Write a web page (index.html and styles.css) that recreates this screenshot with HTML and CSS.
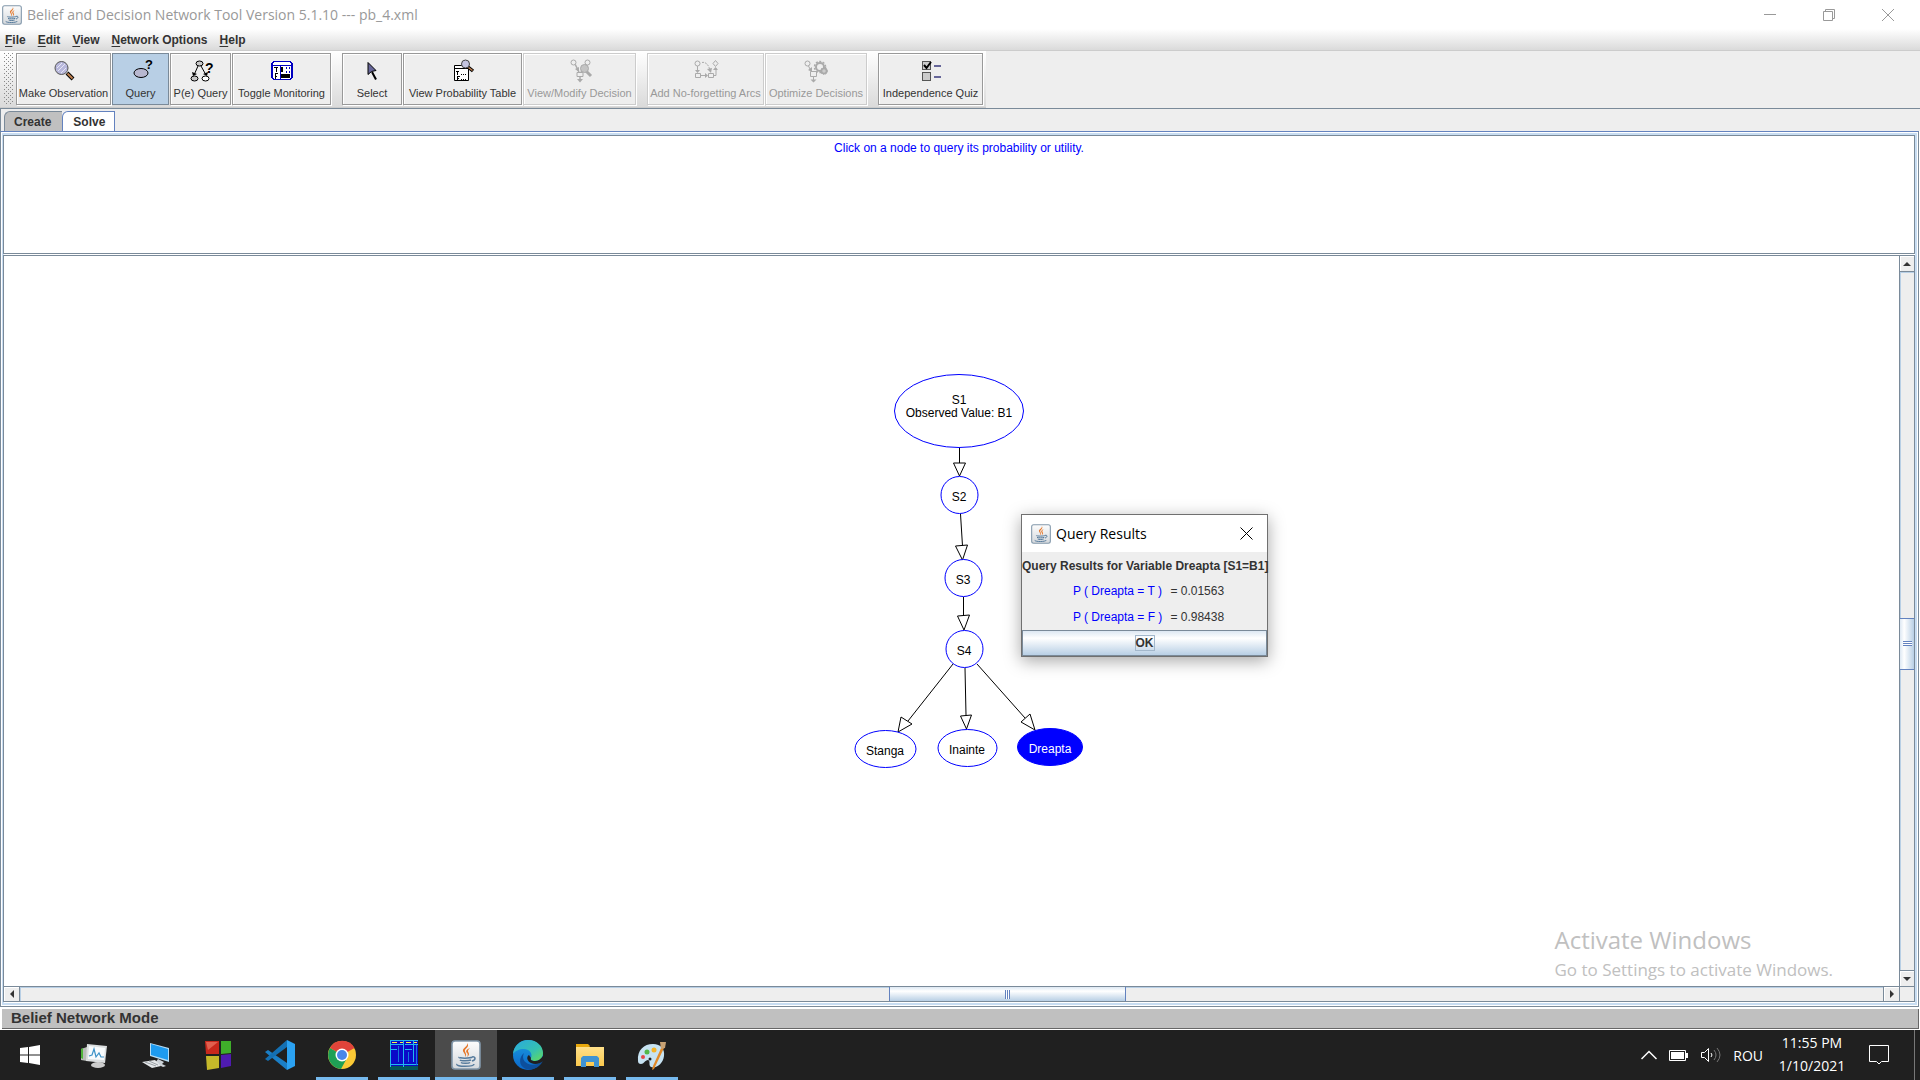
FILE: index.html
```html
<!DOCTYPE html>
<html lang="en">
<head>
<meta charset="utf-8">
<title>Belief and Decision Network Tool Version 5.1.10 --- pb_4.xml</title>
<link rel="stylesheet" href="styles.css">
</head>
<body>
<svg class="defs" aria-hidden="true">
  <defs>
    <linearGradient id="jbg" x1="0" y1="0" x2="0" y2="1"><stop offset="0" stop-color="#fdfdfd"/><stop offset="1" stop-color="#d4d8dc"/></linearGradient>
    <linearGradient id="edge1" x1="0" y1="0" x2="1" y2="1"><stop offset="0" stop-color="#2aa9e0"/><stop offset=".6" stop-color="#35c1b1"/><stop offset="1" stop-color="#66dd55"/></linearGradient>
    <linearGradient id="edge2" x1="0" y1="0" x2="0" y2="1"><stop offset="0" stop-color="#1b9de2"/><stop offset="1" stop-color="#0b66c8"/></linearGradient>
    <linearGradient id="folder" x1="0" y1="0" x2="0" y2="1"><stop offset="0" stop-color="#ffe08a"/><stop offset="1" stop-color="#fbc94d"/></linearGradient>
    <symbol id="java" viewBox="0 0 30 30">
      <rect x="1" y="1" width="28" height="28" rx="3" fill="url(#jbg)" stroke="#8298ab" stroke-width="1.6"/>
      <path d="M16 3c2 3-5 5-4 8 .4 2 3 3 2 6 3-3-1-5 0-7 1-2 5-4 2-7zM19 8c-3 1-5 3-3 5 1 1 1 2 0 4 4-3 1-4 1-6 0-1 1-2 2-3z" fill="#e5772a"/>
      <path d="M8 17c-1 1.500 12 1.500 13 0M9 20c1 1 9 1 11 0M10 22.500c1 1 8 1 9 0M21 17c4-1 4 3 0 4M6 24c-2 3 17 3 17 0" fill="none" stroke="#557a9c" stroke-width="1.500"/>
    </symbol>
  </defs>
</svg>

<div class="window">
  <header class="titlebar">
    <svg class="app-icon" aria-hidden="true"><use href="#java"/></svg>
    <h1 class="title">Belief and Decision Network Tool Version 5.1.10 --- pb_4.xml</h1>
    <div class="window-controls">
      <button type="button" aria-label="Minimize"><svg width="12" height="12"><path d="M0 5.500h12"/></svg></button>
      <button type="button" aria-label="Restore"><svg width="12" height="12"><path d="M.5 2.500h9v9h-9zM2.500 2.500v-2h9v9h-2"/></svg></button>
      <button type="button" aria-label="Close"><svg width="12" height="12"><path d="M0 0l12 12M12 0L0 12"/></svg></button>
    </div>
  </header>

  <nav class="menubar">
    <button type="button"><u>F</u>ile</button>
    <button type="button"><u>E</u>dit</button>
    <button type="button"><u>V</u>iew</button>
    <button type="button"><u>N</u>etwork Options</button>
    <button type="button"><u>H</u>elp</button>
  </nav>

  <div class="toolbar-row">
    <div class="toolbar">
      <span class="grip"></span>
      <button type="button" class="tool w-observe">
        <svg viewBox="0 0 24 24"><path d="M15 14l6 6" stroke="#000" stroke-width="4"/><path d="M15.500 14.500l5 5" stroke="#c08050" stroke-width="2"/><circle cx="9.500" cy="9" r="6.500" fill="#b8b8dc" stroke="#555" /><path d="M5 9l5-5M6 12l7-7M9 14l5-5" stroke="#e6e6f5"/></svg>
        <span>Make Observation</span></button>
      <button type="button" class="tool active w-query">
        <svg viewBox="0 0 24 24"><ellipse cx="12" cy="14" rx="7" ry="4.500" fill="#b8b8d0" stroke="#000"/><text x="16" y="10" font-size="13">?</text></svg>
        <span>Query</span></button>
      <button type="button" class="tool w-pe">
        <svg viewBox="0 0 24 24"><path d="M9 7L5 16M12 7l5 9" stroke="#000"/><path d="M3 13l1 4 4-2zM19 13l-1 4-4-2z" fill="#000"/><ellipse cx="10.500" cy="4.500" rx="3.500" ry="2.500" fill="#c8c8c8" stroke="#000"/><ellipse cx="5.500" cy="19.500" rx="3.500" ry="2.500" fill="#c8c8c8" stroke="#000"/><ellipse cx="16.500" cy="19.500" rx="3.500" ry="2.500" fill="#fff" stroke="#000"/><text x="16" y="14" font-size="14">?</text></svg>
        <span>P(e) Query</span></button>
      <button type="button" class="tool w-monitor">
        <svg viewBox="0 0 24 24" shape-rendering="crispEdges"><path d="M4 2.500h16l2 2v14l-2 2H4l-2-2v-14z" fill="#fff" stroke="#0000c0" stroke-width="1.500"/><path d="M2 6.500h20M10.500 6v14" stroke="#0000c0"/><path d="M11 8h2v5h-2zM11 15h9v4h-9z" fill="#000"/><path d="M16.500 8v2M19.500 8v2M16.500 12v2M19.500 12v2" stroke="#0000c0"/><path d="M4 8.500h4M6.500 8v5M5.500 14v6M5 14.500h3M5 17h2" stroke="#000"/></svg>
        <span>Toggle Monitoring</span></button>
      <span class="separator"></span>
      <button type="button" class="tool w-select">
        <svg viewBox="0 0 24 24"><path d="M12 13l4 7.500" stroke="#000" stroke-width="2"/><path d="M8 3.500v12l3.500-3 4.500-1z" fill="#666699" stroke="#000"/></svg>
        <span>Select</span></button>
      <button type="button" class="tool w-table">
        <svg viewBox="0 0 24 24"><path d="M3.500 6.500h14v15h-14zM3 9.500h15" fill="#fff" stroke="#000"/><path d="M5 12.500h3M6.500 12v4M6.500 17v4M6 17.500h3M6 19.500h2" stroke="#000"/><path d="M10 15.500h6M10 20.500h6" stroke="#000" stroke-dasharray="1 1"/><path d="M17 8l5 4" stroke="#000" stroke-width="3.500"/><path d="M17.500 8.500l4 3" stroke="#c08050" stroke-width="1.500"/><circle cx="14.500" cy="5" r="4" fill="#c4c4e0" stroke="#444"/></svg>
        <span>View Probability Table</span></button>
      <button type="button" class="tool w-modify" disabled>
        <svg viewBox="0 0 24 24"><path d="M7 5l4 8M18 5l-5 8M12 18v4" stroke="#aaa" stroke-width="1.500"/><path d="M9 20h6l-3 3.500zM7 10l4 3V8z" fill="#aaa"/><circle cx="5.500" cy="3.500" r="2.500" fill="#eee" stroke="#aaa"/><circle cx="19.500" cy="3.500" r="2.500" fill="#eee" stroke="#aaa"/><path d="M9 13.500h6v4H9z" fill="#eee" stroke="#aaa"/><path d="M18 12l5 5" stroke="#aaa" stroke-width="3"/><circle cx="16.500" cy="9.500" r="4" fill="#c4c4c4" stroke="#aaa"/></svg>
        <span>View/Modify Decision</span></button>
      <span class="separator"></span>
      <button type="button" class="tool w-arcs" disabled>
        <svg viewBox="0 0 24 24" fill="none" stroke="#aaa"><circle cx="3.500" cy="4.500" r="2.500"/><path d="M21.500 1.500l2.500 3-2.500 3-2.500-3zM1.500 14.500h5v4h-5zM14.500 14.500h5v4h-5zM3.500 7v5M7 16.500h5M19 16.500h3V9"/><path d="M8 3.500c4-1 7 3 8 8" stroke-dasharray="2 1"/><path d="M1 11h5l-2.500 3zM11 14v5l3-2.500zM19 11h5l-2.500-3zM13 10l5-1-1 5z" fill="#aaa" stroke="none"/></svg>
        <span>Add No-forgetting Arcs</span></button>
      <button type="button" class="tool w-optimize" disabled>
        <svg viewBox="0 0 24 24" fill="none" stroke="#aaa"><circle cx="3.500" cy="4.500" r="2.500"/><path d="M4.500 7l2.500 5M6.500 12.500h6v5h-6zM9.500 18v3"/><path d="M6.500 20.500h6l-3 3zM4 11l4 2V8z" fill="#aaa" stroke="none"/><circle cx="16" cy="8" r="4" stroke-width="2"/><circle cx="16" cy="8" r="5.500" stroke-dasharray="2 1.500" stroke-width="1.500"/><circle cx="20" cy="12" r="2.500" fill="#ccc" stroke-width="1.500"/><circle cx="20" cy="12" r="3.500" stroke-dasharray="1.500 1"/></svg>
        <span>Optimize Decisions</span></button>
      <span class="separator"></span>
      <button type="button" class="tool w-quiz">
        <svg viewBox="0 0 24 24" shape-rendering="crispEdges"><path d="M3.500 2.500h8v8h-8zM3.500 13.500h8v8h-8z" fill="#ccc" stroke="#555"/><path d="M5 6l2.500 3L12 3" fill="none" stroke="#000" stroke-width="2" shape-rendering="auto"/><path d="M15 7h7M15 18h7" stroke="#666699" stroke-width="2"/></svg>
        <span>Independence Quiz</span></button>
    </div>
  </div>

  <div class="tabs" role="tablist">
    <button type="button" role="tab" class="tab"><span>Create</span></button>
    <button type="button" role="tab" aria-selected="true" class="tab selected"><span>Solve</span></button>
  </div>

  <main class="tab-page">
    <p class="message">Click on a node to query its probability or utility.</p>
    <section class="network">
      <div class="stage">
        <svg class="graph" width="260" height="420" role="img" aria-label="Belief network">
          <g class="arcs">
            <path d="M118.500 88v16M119.500 154l2 32M122.500 237v19M124 308l1 47M112 304L67 361M136 304l48 54"/>
            <path d="M112.500 103h12l-6 13zM114.500 186l12-1-5 15zM116.500 256l12-1-5.500 15zM119.500 356l11-1-5 14zM60 357l11 7-14 8zM189 354l-9 8 14 8z"/>
          </g>
          <g class="nodes">
            <ellipse cx="118" cy="51" rx="64.500" ry="36.500"/>
            <circle cx="118.500" cy="135" r="18.500"/>
            <circle cx="122.500" cy="218" r="18.500"/>
            <circle cx="123.500" cy="289" r="18.500"/>
            <ellipse cx="44.500" cy="389" rx="30.500" ry="18.500"/>
            <ellipse cx="126.500" cy="388" rx="29.500" ry="18.500"/>
            <ellipse class="queried" cx="209" cy="387" rx="32.500" ry="18.500"/>
          </g>
          <g class="labels">
            <text x="118" y="44">S1</text>
            <text x="118" y="57">Observed Value: B1</text>
            <text x="118" y="141">S2</text>
            <text x="122" y="224">S3</text>
            <text x="123" y="295">S4</text>
            <text x="44" y="395">Stanga</text>
            <text x="126" y="394">Inainte</text>
            <text class="queried" x="209" y="393">Dreapta</text>
          </g>
        </svg>
        <div class="watermark">
          <p class="watermark-title">Activate Windows</p>
          <p class="watermark-text">Go to Settings to activate Windows.</p>
        </div>
      </div>
      <div class="scroll vertical">
        <button type="button" class="arrow" aria-label="Scroll up"><svg width="8" height="4"><path d="M0 4l4-4 4 4z"/></svg></button>
        <div class="track"><span class="before"></span><span class="thumb"><i></i></span><span class="after"></span></div>
        <button type="button" class="arrow" aria-label="Scroll down"><svg width="8" height="4"><path d="M0 0l4 4 4-4z"/></svg></button>
      </div>
      <div class="scroll horizontal">
        <button type="button" class="arrow" aria-label="Scroll left"><svg width="4" height="8"><path d="M4 0L0 4l4 4z"/></svg></button>
        <div class="track"><span class="before"></span><span class="thumb"><i></i></span><span class="after"></span></div>
        <button type="button" class="arrow" aria-label="Scroll right"><svg width="4" height="8"><path d="M0 0l4 4-4 4z"/></svg></button>
      </div>
      <div class="corner"></div>
    </section>
  </main>

  <footer class="status">Belief Network Mode</footer>
</div>

<section class="dialog" role="dialog" aria-labelledby="dialog-title">
  <header class="dialog-bar">
    <svg class="app-icon" aria-hidden="true"><use href="#java"/></svg>
    <h2 class="dialog-title" id="dialog-title">Query Results</h2>
    <button type="button" class="dialog-close" aria-label="Close"><svg width="13" height="13"><path d="M.5.5l12 12M12.500.5l-12 12"/></svg></button>
  </header>
  <h3 class="dialog-heading">Query Results for Variable Dreapta [S1=B1]</h3>
  <dl class="results">
    <dt>P ( Dreapta = T )</dt><dd>= 0.01563</dd>
    <dt>P ( Dreapta = F )</dt><dd>= 0.98438</dd>
  </dl>
  <button type="button" class="ok"><span>OK</span></button>
</section>

<nav class="taskbar">
  <button type="button" class="start" aria-label="Start"><svg width="20" height="20"><path d="M0 3l8-1v7.500H0zM9 2l11-2v9.500H9zM0 10.500h8V18l-8-1zM9 10.500h11V20L9 18z" fill="#fff"/></svg></button>
  <button type="button" class="task" aria-label="Performance monitor"><svg width="30" height="30"><path d="M2 9l6-2v14l-6-1z" fill="#b8bcb8"/><path d="M2 9l2-1v11l-2-1z" fill="#4fb43a"/><ellipse cx="19" cy="25" rx="7" ry="3" fill="#ccc"/><path d="M8 4l20 2-2 17-19-2z" fill="#dcdfe0"/><path d="M10 6l16 2-1 12-16-1z" fill="#f8fbfd"/><path d="M10 16l3-1 2-6 2 8 3-4 2 4 3 0" fill="none" stroke="#3c92c8" stroke-width="1.200"/></svg></button>
  <button type="button" class="task" aria-label="Remote computer"><svg width="30" height="30"><path d="M9 3l19 5v14L9 16z" fill="#b7dcf4"/><path d="M10 4l17 5v11l-17-5z" fill="#1e9bf0"/><path d="M17 19l6 3-2 2 4 2-3 1-8-4z" fill="#ccd2d8"/><path d="M1 22l13-2 6 6-9 2z" fill="#e5e8ea"/><path d="M4 22l11 4M8 21l9 4" stroke="#9aa0a5"/></svg></button>
  <button type="button" class="task" aria-label="Color blocks"><svg width="30" height="30"><path d="M2 1l14 0v13l-13 0z" fill="#c8281c"/><path d="M18 1l10 0v12l-10 1z" fill="#3fae2a"/><path d="M3 16l13 0v12l-12 2z" fill="#c5b92a"/><path d="M18 15l10-1v12l-10 2z" fill="#4f1bb0"/><path d="M3 2l12 0-10 8z" fill="#e0604f"/></svg></button>
  <button type="button" class="task" aria-label="Visual Studio Code"><svg width="30" height="30"><path d="M0 12l3-2 19 13v7z" fill="#1b7fc6"/><path d="M22 7L3 21l-3-2L22 0z" fill="#1470b3"/><path d="M22 0l8 4v22l-8 4z" fill="#2ba2f2"/></svg></button>
  <button type="button" class="task running" aria-label="Chrome"><svg width="28" height="28"><circle cx="14" cy="14" r="14" fill="#fbc935"/><path d="M14 14L2 7A14 14 0 0 1 26.500 7z" fill="#e0443a"/><path d="M2 7A14 14 0 0 0 13 28l6-11-5-3z" fill="#1fa055"/><circle cx="14" cy="14" r="6.500" fill="#fff"/><circle cx="14" cy="14" r="5" fill="#4a86ea"/></svg></button>
  <button type="button" class="task running" aria-label="File manager"><svg width="30" height="30" shape-rendering="crispEdges"><path d="M1 26h28v4H1z" fill="#03565c"/><path d="M1 0h28v26H1z" fill="#0a0ac8"/><path d="M1 .5h28M1 4.500h13M16 4.500h13M1 9.500h7M16 9.500h7M1 24.500h28M1 .5v26M14.500 0v27M24.500 0v22" stroke="#20b8f0" fill="none"/><path d="M3 2.500h5M11 2.500h3M17 2.500h5M25 2.500h3" stroke="#fff04a"/><path d="M9.500 6v16M19.500 12v10M27.500 5v20" stroke="#1478dc"/></svg></button>
  <button type="button" class="task running current" aria-label="Belief and Decision Network Tool"><svg width="30" height="30"><use href="#java"/></svg></button>
  <button type="button" class="task running" aria-label="Edge"><svg width="30" height="30"><circle cx="15" cy="15" r="15" fill="url(#edge2)"/><path d="M0 14C1 5 8 0 15 0c9 0 15 6 15 13 0 5-4 8-8 8-3 0-5-1-4-3 2-5-2-9-7-9C6 9 2 11 0 14z" fill="url(#edge1)"/><path d="M11 13c-4 8 5 15 16 10l3-2c-4 7-11 10-17 8C5 26 6 17 11 13z" fill="#0d4f9c"/><path d="M18 18c-1 2 1 3 4 3 3 0 6-2 8-5v5c-3 3-8 4-12 2-4-2-5-6-2-8z" fill="#202020"/></svg></button>
  <button type="button" class="task running" aria-label="File Explorer"><svg width="28" height="24"><path d="M0 1h12l2 2-2 3H0z" fill="#e8a80c"/><path d="M0 4h28v19H0z" fill="url(#folder)"/><path d="M5 24v-9l2-2h14l2 2v9h-5v-5h-8v5z" fill="#3f93d2"/></svg></button>
  <button type="button" class="task running" aria-label="Paint"><svg width="30" height="30"><path d="M1 21C0 10 7 4 16 4c8 0 12 5 11 12-1 8-8 13-13 11-3-2 0-6-3-7-3 0-4 4-7 4-2 0-3-1-3-3z" fill="#c7e3f2"/><circle cx="6" cy="17" r="2" fill="#e54848"/><circle cx="10" cy="12" r="2.500" fill="#55b848"/><circle cx="17" cy="10" r="2.500" fill="#f5b428"/><circle cx="13" cy="19" r="1.500" fill="#222"/><path d="M25 6l2 2-10 21-2 1 1-4z" fill="#e28a28"/><path d="M23 2l6 0-1 6-4 1z" fill="#c8a274"/></svg></button>

  <div class="tray">
    <button type="button" aria-label="Show hidden icons"><svg width="16" height="10"><path d="M.5 9L8 1.500 15.500 9" fill="none" stroke="#fff" stroke-width="1.500"/></svg></button>
    <button type="button" aria-label="Battery"><svg width="20" height="12"><path d="M.5 1.500h16v10H.5z" fill="none" stroke="#fff"/><path d="M2 3h13v7H2zM17 4h2v5h-2z" fill="#fff"/></svg></button>
    <button type="button" aria-label="Volume"><svg width="20" height="18" fill="none" stroke="#fff"><path d="M.5 6.500h3l4-4v13l-4-4h-3zM10 7q2 2 0 4"/><path d="M13 4q4 5 0 10M16 2q6 7 0 14" stroke="#777"/></svg></button>
    <button type="button" class="language">ROU</button>
    <button type="button" class="clock"><time datetime="2021-01-10T23:55">11:55 PM<br>1/10/2021</time></button>
    <button type="button" class="notify" aria-label="Notifications"><svg width="20" height="20"><path d="M.5.500h19v16h-7L10 19l-2.500-2.500h-7z" fill="none" stroke="#fff"/></svg></button>
    <span class="show-desktop"></span>
  </div>
</nav>
</body>
</html>
```
FILE: styles.css
```css
* { box-sizing: border-box; }

body {
  margin: 0;
  min-height: 100vh;
  display: flex;
  flex-direction: column;
  position: relative;
  background: #fff;
  color: #333;
  font: 12px/16px "Liberation Sans", Arial, sans-serif;
}

h1, h2, h3, p, dl, dd { margin: 0; }

button {
  margin: 0;
  padding: 0;
  border: 0;
  background: none;
  color: inherit;
  font: inherit;
}

.defs { position: absolute; width: 0; height: 0; }

.window {
  flex: 1;
  display: flex;
  flex-direction: column;
  border-bottom: 1px solid #fff;
}

/* Title bar */
.titlebar {
  display: flex;
  align-items: center;
  height: 29px;
  padding: 0 3px 0 2px;
}

.app-icon { width: 20px; height: 20px; flex: none; }

.title {
  flex: 1;
  padding-left: 5px;
  color: #999;
  font: 14px/20px "Open Sans", sans-serif;
}

.window-controls { display: flex; }

.window-controls button {
  display: grid;
  place-items: center;
  width: 59px;
  height: 28px;
}

.window-controls path { fill: none; stroke: #999; }

/* Menu bar */
.menubar {
  display: flex;
  gap: 12px;
  height: 22px;
  padding: 2px 5px;
  background: linear-gradient(#fff, #dadada);
  border-bottom: 1px solid #ccc;
}

.menubar button { font-weight: bold; line-height: 16px; }
.menubar u { text-underline-offset: 2px; }

/* Tool bar */
.toolbar-row { background: #eee; border-bottom: 1px solid #7a8a99; }

.toolbar {
  display: flex;
  width: max-content;
  padding: 2px 2px 1px;
  height: 57px;
  background: linear-gradient(#fff, #dadada);
  border-bottom: 1px solid #ccc;
}

.grip {
  width: 10px;
  margin: 0 2px;
  height: 52px;
  background:
    conic-gradient(at 1px 1px, transparent 75%, #888 0) 0 0 / 4px 4px,
    conic-gradient(at 1px 1px, transparent 75%, #888 0) 2px 2px / 4px 4px;
}

.separator { width: 10px; }

.tool {
  display: flex;
  flex-direction: column;
  align-items: center;
  gap: 3px;
  height: 52px;
  margin-right: 1px;
  padding-top: 5px;
  background: #eee;
  border: 1px solid #999;
  box-shadow: inset 1px 1px #fff, 1px 1px #fff;
  font-size: 11px;
  line-height: 14px;
  white-space: nowrap;
}

.tool svg { width: 24px; height: 24px; flex: none; overflow: visible; }
.tool text { font-weight: bold; fill: #000; }
.tool:disabled { color: #999; border-color: #ccc; }
.tool.active { background: #b8cfe5; border-color: #7a8a99; box-shadow: none; }

.w-observe { width: 95px; }
.w-query { width: 57px; }
.w-pe { width: 61px; }
.w-monitor { width: 99px; }
.w-select { width: 60px; }
.w-table { width: 119px; }
.w-modify { width: 113px; }
.w-arcs { width: 117px; }
.w-optimize { width: 102px; }
.w-quiz { width: 105px; }

/* Tabs */
.tabs {
  display: flex;
  height: 22px;
  padding: 2px 3px 0;
  background: #eee;
  border-left: 1px solid #7a8a99;
}

.tab {
  padding: 0 11px 0 9px;
  background: #c0c0c0;
  border: 1px solid #7a8a99;
  border-right: 0;
  border-bottom: 0;
  border-top-left-radius: 6px;
  font-weight: bold;
  line-height: 18px;
}

.tab.selected {
  padding: 0 9px 0 10px;
  background: #fff;
  border: 1px solid #6382bf;
  border-bottom: 0;
}

/* Page under the tabs */
.tab-page {
  flex: 1;
  display: flex;
  flex-direction: column;
  gap: 1px;
  margin-right: 1px;
  padding: 1px;
  border: 1px solid #7a8a99;
  border-top-color: #6382bf;
  background: #fff;
  outline: 2px solid #c8ddf2;
  outline-offset: -4px;
}

.message {
  height: 119px;
  margin: 2px 2px 0 1px;
  padding-top: 4px;
  border: 1px solid #7a8a99;
  background: #fff;
  color: #00f;
  text-align: center;
  position: relative;
}

.network {
  flex: 1;
  display: grid;
  grid-template: minmax(0, 1fr) 15px / minmax(0, 1fr) 15px;
  margin: 0 2px 3px 1px;
  border: 1px solid #7a8a99;
  background: #fff;
  position: relative;
}

.stage { position: relative; overflow: hidden; }

.graph {
  position: absolute;
  left: calc(50% - 111px);
  top: 104px;
}

.arcs path { fill: #fff; stroke: #000; }
.nodes * { fill: #fff; stroke: #00f; }
.nodes .queried { fill: #00f; }
.labels { text-anchor: middle; font-size: 12px; fill: #000; }
.labels .queried { fill: #fff; }

.watermark {
  position: absolute;
  right: 66px;
  bottom: 2px;
  color: #c0c0c0;
  font-family: "Open Sans", sans-serif;
}

.watermark-title { font-size: 24px; line-height: 32px; }
.watermark-text { font-size: 17px; line-height: 28px; }

/* Scroll bars */
.scroll { display: flex; background: #eee; }
.scroll.vertical { flex-direction: column; border-left: 1px solid #7a8a99; }
.scroll.horizontal { border-top: 1px solid #7a8a99; }

.arrow {
  display: grid;
  place-items: center;
  flex: none;
  box-shadow: inset 1px 1px #fff;
}

.vertical .arrow { height: 15px; }
.horizontal .arrow { width: 15px; }
.arrow path { fill: #333; }

.track {
  flex: 1;
  display: flex;
  border: solid #7a8a99;
  box-shadow: inset 1px 1px #b8cfe5;
}

.vertical .track { flex-direction: column; border-width: 1px 0; }
.horizontal .track { border-width: 0 1px; }

.vertical .before { flex: 347; }
.vertical .thumb { flex: 51; }
.vertical .after { flex: 301; }
.horizontal .before { flex: 870; }
.horizontal .thumb { flex: 235; }
.horizontal .after { flex: 758; }

.thumb { display: grid; place-items: center; border: solid #6382bf; }

.vertical .thumb {
  border-width: 1px 0;
  background: linear-gradient(90deg, #dde8f3, #fff 30%, #b8cfe5);
}

.horizontal .thumb {
  border-width: 0 1px;
  background: linear-gradient(#dde8f3, #fff 30%, #b8cfe5);
}

.horizontal i {
  width: 5px;
  height: 9px;
  background: repeating-linear-gradient(90deg, #6382bf 0 1px, #fff 1px 2px);
}

.vertical i {
  width: 9px;
  height: 5px;
  background: repeating-linear-gradient(#6382bf 0 1px, #fff 1px 2px);
}

.corner { background: #eee; border: solid #7a8a99; border-width: 1px 0 0 1px; }

/* Status line */
.status {
  margin: 2px 1px 0 2px;
  padding: 0 0 1px 9px;
  background: #c0c0c0;
  border: solid #666;
  border-width: 0 1px 1px 0;
  font-size: 15px;
  font-weight: bold;
  line-height: 18px;
}

/* Query results dialog */
.dialog {
  position: absolute;
  left: calc(50% + 61px);
  top: 514px;
  width: 247px;
  border: 1px solid #707070;
  background: #eee;
  box-shadow: 0 4px 16px rgba(0, 0, 0, .35);
}

.dialog-bar {
  display: flex;
  align-items: center;
  height: 37px;
  padding: 0 14px 0 9px;
  background: #fff;
}

.dialog-title {
  flex: 1;
  padding-left: 5px;
  color: #000;
  font: 14px/20px "Open Sans", sans-serif;
}

.dialog-close { display: grid; }
.dialog-close path { stroke: #000; }

.dialog-heading {
  padding: 6px 0 4px;
  font-size: 12px;
  line-height: 16px;
  text-align: center;
  white-space: nowrap;
}

.results {
  display: grid;
  grid-template-columns: max-content max-content;
  justify-content: center;
  column-gap: 8px;
  padding-left: 8px;
  line-height: 26px;
  white-space: nowrap;
}

.results dt { color: #00f; }

.ok {
  display: block;
  width: 100%;
  height: 26px;
  border: 1px solid #7a8a99;
  background: linear-gradient(#dde8f3, #fff 30%, #b8cfe5);
  font-weight: bold;
}

.ok span { border: 1px solid #a3b8cc; }

/* Taskbar */
.taskbar {
  display: flex;
  height: 50px;
  background: #202020;
  color: #fff;
}

.start, .task { display: grid; place-items: center; }
.start { width: 63px; padding-right: 3px; }
.task { width: 62px; position: relative; }
.task svg { overflow: visible; }
.task.current { background: #4b4b4b; }

.task.running::after {
  content: "";
  position: absolute;
  left: 5px;
  right: 5px;
  bottom: 0;
  height: 3px;
  background: #76b9ed;
}

.task.current::after { left: 0; right: 0; }

.tray {
  display: flex;
  align-items: center;
  gap: 12px;
  margin-left: auto;
  font: 14px/23px "Open Sans", sans-serif;
}

.tray button { display: grid; place-items: center; }
.tray .clock { width: 74px; padding-bottom: 2px; text-align: center; }
.tray .notify { width: 36px; margin-right: 5px; }
.show-desktop { width: 6px; height: 50px; border-left: 1px solid #777; }
```
